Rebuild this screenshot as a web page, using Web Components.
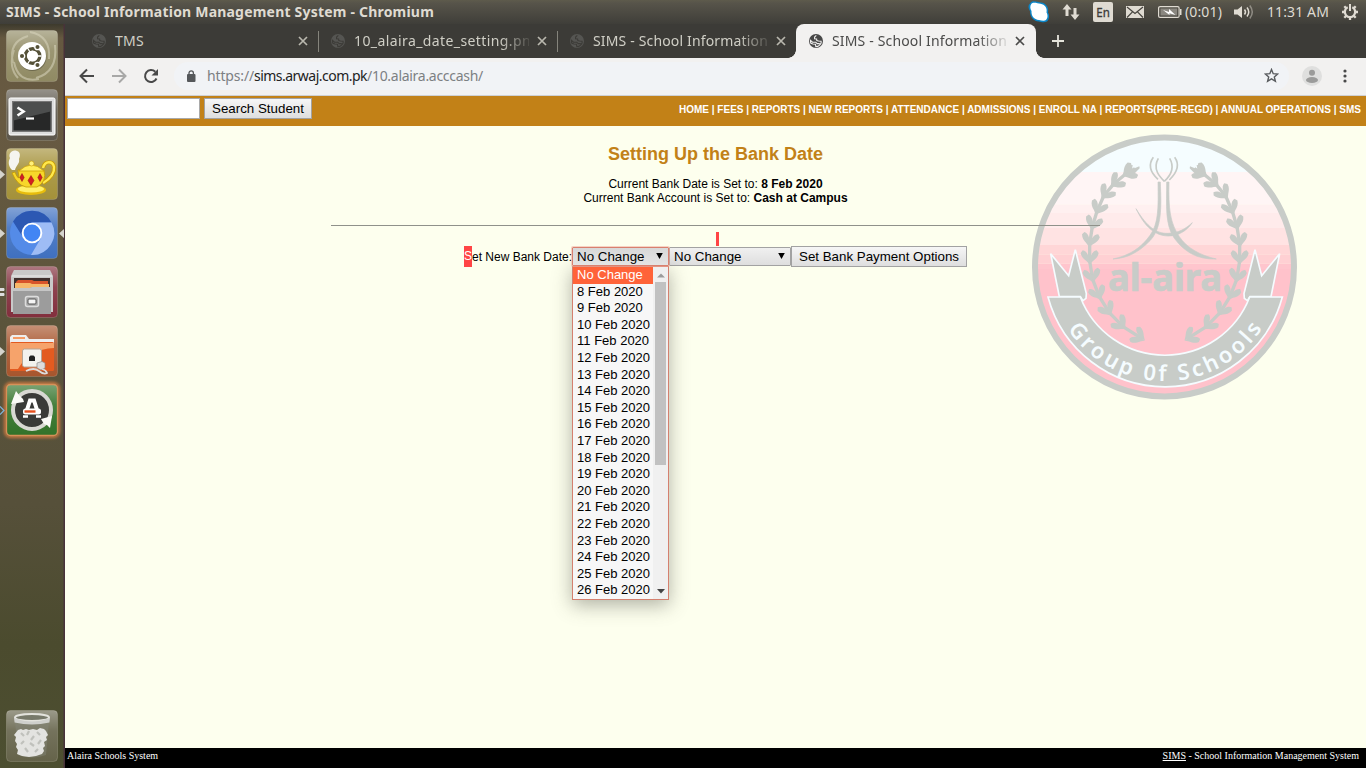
<!DOCTYPE html>
<html lang="en">
<head>
<meta charset="utf-8">
<title>SIMS - School Information Management System</title>
<style>
html,body{margin:0;width:1366px;height:768px;overflow:hidden;background:#fdffee}
</style>
</head>
<body>
<desktop-shell></desktop-shell>
<script>
class Part extends HTMLElement {
  connectedCallback() {
    if (this.shadowRoot) return;
    this.attachShadow({ mode: 'open' }).innerHTML = this.view();
  }
}
const define = (name, view) => customElements.define(name, class extends Part { view() { return view(this); } });

/* Text run that spreads its letters to fill the width given in "w". */
customElements.define('fit-text', class extends HTMLElement {
  connectedCallback() {
    if (this.shadowRoot) return;
    this.attachShadow({ mode: 'open' }).innerHTML =
      '<style>:host{display:inline-block;white-space:pre}span{display:inline-block}</style><span><slot></slot></span>';
    const w = +this.getAttribute('w'), n = this.textContent.length;
    const s = this.shadowRoot.querySelector('span');
    const now = s.getBoundingClientRect().width;
    if (now && w) { s.style.letterSpacing = ((w - now) / n) + 'px'; this.style.width = w + 'px'; }
  }
});

define('top-panel', () => `
<style>
:host{display:flex;align-items:center;justify-content:space-between;height:24px;box-sizing:border-box;padding:0 7px 0 6px;
 background:linear-gradient(#5e5b4c 0,#57544a 3px,#3f3e39 100%);color:#dfdbd2;font:14px "Noto Sans",sans-serif}
.t{font:bold 14px "Noto Sans",sans-serif;line-height:24px}
.r{display:flex;align-items:center;height:24px;line-height:24px}
svg{display:block}
</style>
<fit-text class="t" w="428">SIMS - School Information Management System - Chromium</fit-text>
<div class="r">
<svg width="22" height="24" viewBox="0 0 22 24"><path d="M2 3.500C4-.5 9 2 13 2.500c5 .5 8 5 7 10 2 3 1 7-1 9-3 1.500-6 .5-8 0C5 21 2 17 2 11 0 8 0 5 2 3.500Z" fill="#0c86c8"/><path d="M3 4.500C5 1.500 9 3.500 12.500 3.800c4.500.7 7 4.200 6 8.700 1.800 3 1 6-.5 7.500-2 1.300-4.500.3-7 0C6 19.500 3.200 16 3.500 11 2 8.500 2 6 3 4.500Z" fill="#fff"/></svg>
<svg width="18" height="18" viewBox="0 0 18 18" style="margin-left:12px" fill="#dfdbd2"><path d="M5 1 .5 6.500h3V13h3V6.500h3ZM13 17l4.500-5.500h-3V5h-3v6.500h-3Z"/></svg>
<svg width="20" height="20" viewBox="0 0 20 20" style="margin-left:13px"><rect width="20" height="20" rx="2" fill="#dfdbd2"/><text x="3.300" y="15.200" font-family="Noto Sans" font-size="13" textLength="13.500" lengthAdjust="spacingAndGlyphs" fill="#3c3b37" stroke="#3c3b37" stroke-width=".3">En</text></svg>
<svg width="18" height="14" viewBox="0 0 18 14" style="margin-left:13px"><rect y="1" width="18" height="12" fill="#dfdbd2"/><path d="m1 2 8 6.500L17 2M1 12.500l5.500-5.700M17 12.500l-5.500-5.700" fill="none" stroke="#45433d" stroke-width="1.200"/></svg>
<svg width="24" height="14" viewBox="0 0 24 14" style="margin-left:14px"><rect x=".6" y="1.600" width="20.500" height="10.800" rx="1.500" fill="none" stroke="#dfdbd2" stroke-width="1.200"/><rect x="2.500" y="3.500" width="16.700" height="7" fill="#8a8780"/><path d="M22 4h1.500v6H22Z" fill="#dfdbd2"/><path d="m5 5 6 2V4l6.500 6-6-1.800V10Z" fill="#fff"/></svg>
<fit-text w="37" style="margin-left:3px">(0:01)</fit-text>
<svg width="20" height="16" viewBox="0 0 20 16" style="margin-left:12px"><path d="M0 5.500h3.500L8 2v12l-4.500-3.500H0Z" fill="#dfdbd2"/><g fill="none" stroke="#dfdbd2" stroke-width="1.500"><path d="M10.500 5.500q2 2.500 0 5"/><path d="M13 3.500q3.500 4.500 0 9"/><path d="M15.800 1.500q5 6.500 0 13" opacity=".45"/></g></svg>
<fit-text w="62" style="margin-left:13px">11:31 AM</fit-text>
<svg width="18" height="18" viewBox="-9 -9 18 18" style="margin-left:12px"><g stroke="#dfdbd2" stroke-width="2.300" fill="none"><path d="M-2.300-4.700A5.200 5.200 0 1 0 2.300-4.700"/><path d="M0-8V-1" stroke-width="2"/><path d="m-8 0h3M5 0h3M0 5v3M-5.700-5.700l2 2M5.700-5.700l-2 2M-5.700 5.700l2-2M5.700 5.700l-2-2"/></g></svg>
</div>`);

const tileArt = {
ubuntu: ['#908a63', `<path d="M24 2Q45 6 43 29M49 15Q52 42 30 48M7 33Q2 12 22 6M33 49Q12 53 8 32M12 48Q2 37 8 20" fill="none" stroke="#d8d5bd" stroke-width="2" opacity=".55"/><circle cx="26.500" cy="27" r="14" fill="#55513c" opacity=".6"/><circle cx="26" cy="26" r="14" fill="#fff"/><circle cx="26.500" cy="26" r="7.300" fill="none" stroke="#555138" stroke-width="3.400"/><g stroke="#fff" stroke-width="1.300" fill="#555138"><path d="m26.500 26 9 0M26.500 26l-5-8M26.500 26l-5 8" /><circle cx="26.500" cy="26" r="5.200" fill="#fff" stroke="none"/><circle cx="16" cy="26" r="2.700"/><circle cx="31.500" cy="17" r="2.700"/><circle cx="31.500" cy="35" r="2.700"/></g>`],
terminal: ['#5c564b', `<rect x="3" y="9" width="46" height="37" rx="1.500" fill="#ddd" stroke="#fff"/><rect x="6" y="12" width="40" height="31" fill="#777"/><rect x="7.500" y="13.500" width="37" height="28" fill="#272828"/><path d="M7.500 13.500h37v9l-37 9Z" fill="#4c4e4e"/><path d="m11.500 18.500 6 4-6 4" fill="none" stroke="#fff" stroke-width="2.600"/><path d="M20 29.500h8" stroke="#fff" stroke-width="2.200"/>`],
teapot: ['#a49139', `<path d="M6 22C1 17 3 12 4 10 2 6 6 1 11 3c4 1 3 6 2 8 1 5-3 6-4 11Z" fill="#f5f5ef"/><path d="M37 20C39 12 47 13 48 19c1 8-6 13-11 16" fill="none" stroke="#c89b00" stroke-width="4"/><path d="M37 20C39 12 47 13 48 19c1 8-6 13-11 16" fill="none" stroke="#ffe84c" stroke-width="2.400"/><ellipse cx="25" cy="42" rx="15" ry="5" fill="#e8bd0c"/><ellipse cx="25" cy="41" rx="13" ry="3.500" fill="#fff06a"/><path d="M12 22h26q3 12-7 17H20Q11 37 6 25l3-1q2 6 4 6Z" fill="#f7d72a" stroke="#c79a00" stroke-width=".8"/><path d="M13 23q12-12 25 0Z" fill="#ffec57" stroke="#c79a00" stroke-width=".7"/><circle cx="25.500" cy="15.500" r="2.500" fill="#fff07a" stroke="#c79a00" stroke-width=".6"/><g fill="#d41e22" stroke="#8e1313" stroke-width=".5"><path d="m16 25.500 2.200 4-2.200 4-2.200-4ZM25 27.500l3 5-3 5-3-5ZM34 25.500l2.200 4-2.200 4-2.200-4Z"/></g>`],
chromium: ['#3f70c0', `<circle cx="26" cy="26" r="22" fill="#548be8"/><path d="M7 14.500A22 22 0 0 1 45.500 15.500H26Q17 16 15.500 28Z" fill="#2c58b3"/><path d="M26 15.500h19.500A22 22 0 0 1 25 48l10-17Q37 20 26 15.500Z" fill="#9ebcf5"/><circle cx="26" cy="26" r="10.300" fill="#fff"/><circle cx="26" cy="26" r="8.400" fill="#4285f4"/>`],
files: ['#822f3d', `<path d="M8 4h36l3 6v36H5V10Z" fill="#c9c9c9"/><path d="M6 10h40" stroke="#eee"/><rect x="8" y="12" width="36" height="12" fill="#40302e"/><path d="M12 14h14l2 1h14v9H10V16Z" fill="#d8542b"/><path d="M9 17h15l2 1h17v6H9Z" fill="#f7b86a"/><path d="M7 22h17l2-1h19v27H7Z" fill="#9c9c9c"/><path d="M7 22h17l2-1h19v4H7Z" fill="#c5c5c5"/><rect x="19.500" y="30.500" width="13" height="10" rx="2" fill="#a7a7a7" stroke="#ddd" stroke-width="1.500"/><rect x="22" y="33" width="8" height="5" rx="1" fill="#f4f4f4" stroke="#555"/>`],
folder: ['#a7552d', `<path d="M4 12 6 10h14l3 4h25v8H4Z" fill="#eee"/><path d="M7 12h12v2H7Z" fill="#f59b65"/><rect x="4" y="17" width="44" height="29" rx="1.500" fill="#e35b20"/><path d="M4 18h44v5Q23 24 12 44H4Z" fill="#f6a36b"/><rect x="16.500" y="24" width="19" height="18" rx="2" fill="#f3f2ee" stroke="#b7a493"/><path d="M23 36v-4l1.500-1.500h3L29 32v4Z" fill="#222"/><path d="m31 38 5-1.500 3 1.500v5l-4 2-4-2Z" fill="#ddd" stroke="#8b8b8b" stroke-width=".7"/><path d="M20 46q8-4 13 0t8 2q-1-3-5-4" fill="none" stroke="#ddd" stroke-width="1.800"/>`],
updater: ['#327229', `<circle cx="26" cy="26" r="19" fill="#393a38" stroke="#d8d8d3" stroke-width="4"/><path d="M5 20 10 7l3 4 4 4 1 3ZM35 35l11-3-2 12-3-3-3-1Z" fill="#fafaf7"/><path d="m20 29 4-12.500h4L32 29" fill="none" stroke="#fff" stroke-width="4"/><rect x="17" y="24.500" width="18" height="6" rx="2.500" fill="#fff"/><path d="M17 32.500h5M30 32.500h5" stroke="#fff" stroke-width="2.400"/><rect x="18.500" y="26.300" width="11" height="2.400" fill="#e6501e"/>`],
trash: ['#65634a', `<path d="M9 11h34l-3 34q-14 5-28 0Z" fill="#85877a" opacity=".45"/><g fill="#e3e3e0"><path d="m12 20 3-1 2 1 3-1 3 1 4-1 4 1 3-2 4 1 2 2 2 4-2 2 1 3-3 2 1 4-2 2 1 3-2 3-6 2-7 1-7-1-5-2 1-4-2-3 1-3-2-3 1-4-2-2Z"/></g><path d="m15 23 3 3M23 21l-2 4M31 22l3 3M28 26l-3 4M18 31l-3 3M24 33l4 3M35 30l-3 4M19 38l3 4M32 39l-3 3" fill="none" stroke="#c0c1bc" stroke-width="2.200"/><ellipse cx="26" cy="7.500" rx="17" ry="3.600" fill="#77796a" stroke="#e3e3dd" stroke-width="2"/><path d="M8 8q18 7 36 0l-.6 4.500q-17.400 4-34.800 0Z" fill="#cfd0cc"/>`]
};
define('launcher-tile', el => {
  const [bg, art] = tileArt[el.getAttribute('app')], mark = el.getAttribute('mark') || '';
  const marks = { run: '<path d="M0 22l5 4.500L0 31Z" fill="#d5d4cd"/>', two: '<path d="M0 22.500h4v2H0ZM0 27.500h4v2H0Z" fill="#ddd" stroke="#ddd"/>', urg: '<path d="M0 22.500l4 4L0 30.500" fill="none" stroke="#7db4dc" stroke-width="1.200"/>', focus: '<path d="M0 22l5 4.500L0 31ZM64 22l-5 4.500 5 4.500Z" fill="#d5d4cd"/>' };
  return `<style>:host{display:block;height:52px}svg{display:block;overflow:visible}</style>
<svg width="65" height="52" viewBox="0 0 65 52"><defs><linearGradient id="g" x2="0" y2="1"><stop stop-color="#fff" stop-opacity=".35"/><stop offset=".4" stop-color="#fff" stop-opacity=".1"/><stop offset="1" stop-color="#fff" stop-opacity="0"/></linearGradient><filter id="f" x="-20%" y="-20%" width="140%" height="140%"><feGaussianBlur stdDeviation="1.500"/></filter></defs>
${mark === 'urg' ? '<rect x="5.500" y="-.5" width="53" height="53" rx="5" fill="none" stroke="#e08040" stroke-width="2.500" filter="url(#f)"/>' : ''}
<rect x="6.500" y=".5" width="51" height="51" rx="4" fill="${bg}" stroke="#c8c4b4" stroke-opacity=".25"/><rect x="6.500" y=".5" width="51" height="51" rx="4" fill="url(#g)"/><g transform="translate(6)">${art}</g>
${mark === 'urg' ? '<rect x="6.500" y=".5" width="51" height="51" rx="4" fill="none" stroke="#d79058" stroke-width="1.300"/>' : ''}${marks[mark] || ''}</svg>`;
});
define('launcher-bar', () => `
<style>
:host{display:flex;flex-direction:column;gap:7px;box-sizing:border-box;padding:6px 0;width:65px;height:744px;
 background:linear-gradient(90deg,transparent 63px,#48323a 64px),linear-gradient(#3d3a2d 0,#655840 14px,#685a42 100px,#5b543b 300px,#56503a 480px,#4b4b2e 620px,#4d4f31 744px)}
.end{margin-top:auto}
</style>
<launcher-tile app="ubuntu"></launcher-tile><launcher-tile app="terminal"></launcher-tile><launcher-tile app="teapot" mark="run"></launcher-tile>
<launcher-tile app="chromium" mark="focus"></launcher-tile><launcher-tile app="files" mark="two"></launcher-tile><launcher-tile app="folder" mark="run"></launcher-tile>
<launcher-tile app="updater" mark="urg"></launcher-tile><launcher-tile app="trash" class="end"></launcher-tile>`);

define('browser-tab', el => {
  const on = el.hasAttribute('active'), bg = on ? '#f2f1f0' : '#3c3b37';
  return `<style>
:host{display:block;position:relative;width:239px;height:34px;font:14px "Noto Sans",sans-serif;color:${on ? '#4b4b4a' : '#d0cfc6'}}
.b{display:grid;grid-template-columns:14px 175px 10px;column-gap:8px;align-items:center;box-sizing:border-box;height:34px;padding-left:13px;${on ? 'background:#f2f1f0;border-radius:8px 8px 0 0;margin-right:-1px' : ''}}
.b>svg{display:block}
.t{margin-left:1px;width:175px;overflow:hidden;white-space:nowrap;line-height:34px;${el.hasAttribute('fade') ? '-webkit-mask:linear-gradient(90deg,#000 145px,transparent 180px)' : ''}}
.x{margin-left:1px}
${el.hasAttribute('rule') ? ':host::after{content:"";position:absolute;right:-1px;top:7px;width:1px;height:21px;background:#85847c}' : ''}
.f{position:absolute;bottom:0;width:8px;height:8px}
.l{left:-8px;background:radial-gradient(circle at 0 0,transparent 7.500px,#f2f1f0 8px)}
.r{right:-9px;background:radial-gradient(circle at 100% 0,transparent 7.500px,#f2f1f0 8px)}
</style>${on ? '<i class="f l"></i><i class="f r"></i>' : ''}
<div class="b"><svg width="14" height="14" viewBox="0 0 14 14"><circle cx="7" cy="7" r="7" fill="${on ? '#484848' : '#555552'}"/><path d="M7.300 1.400 5.600 3v1.800l2 .2.200 1.500 1.700.5 2.600.2q.3 1.500-.4 2.800L9.500 9.600H8.200L6.800 8.200H3.500L1.500 6.300q-.2 1.500.4 3l2 .7 2.600.3.300 2.300 2-.2 2.700-2" fill="none" stroke="${bg}" stroke-width="1.100"/></svg>
<div class="t"><slot></slot></div>
<svg class="x" width="10" height="10" viewBox="0 0 10 10"><path d="m1 1 8 8M9 1 1 9" stroke="${on ? '#4b4b4a' : '#b9b8ae'}" stroke-width="1.700"/></svg></div>`;
});
define('tab-strip', () => `
<style>:host{display:flex;align-items:center;height:34px;padding-left:14px;background:#3c3b37;font:14px "Noto Sans",sans-serif}.p{margin-left:17px}</style>
<browser-tab rule><fit-text w="29">TMS</fit-text></browser-tab>
<browser-tab rule fade><fit-text w="177">10_alaira_date_setting.pn</fit-text></browser-tab>
<browser-tab fade><fit-text w="175">SIMS - School Information</fit-text></browser-tab>
<browser-tab active fade><fit-text w="175">SIMS - School Information</fit-text></browser-tab>
<svg class="p" width="12" height="12" viewBox="0 0 12 12"><path d="M6 0v12M0 6h12" stroke="#e6e5dc" stroke-width="1.800"/></svg>`);

define('tool-bar', () => `
<style>
:host{display:flex;align-items:center;box-sizing:border-box;height:38px;background:#f2f1f0;border-bottom:1px solid #cfd0d2;font:14px "Noto Sans",sans-serif;padding:0 13px 2px 14px}
svg{display:block}
.o{display:flex;align-items:center;flex:1;height:28px;margin:0 13px 0 15px;padding:0 10px 0 13px;border-radius:14px;background:#f1f3f6;color:#7c8083}
.u{margin-left:11px;display:flex;flex:1}.d{color:#222}
</style>
<svg width="16" height="16" viewBox="0 0 16 16"><path d="M15 8H2M8 1.500 1.500 8 8 14.500" fill="none" stroke="#494949" stroke-width="2"/></svg>
<svg width="16" height="16" viewBox="0 0 16 16" style="margin-left:16px"><path d="M1 8h13M8 1.500 14.500 8 8 14.500" fill="none" stroke="#a8a8a7" stroke-width="2"/></svg>
<svg width="16" height="16" viewBox="0 0 16 16" style="margin-left:16px"><path d="M13.500 10.500A6 6 0 1 1 12.300 3.800" fill="none" stroke="#494949" stroke-width="2"/><path d="M15 1v6.500H8.500Z" fill="#494949"/></svg>
<div class="o"><svg width="10" height="12" viewBox="0 0 10 12" style="margin-left:-1px"><rect x="1" y="4" width="8.500" height="8" rx="1" fill="#55585b"/><path d="M3 5V3a2.200 2.200 0 0 1 4.400 0v2" fill="none" stroke="#55585b" stroke-width="1.300"/></svg>
<div class="u"><fit-text w="47">https://</fit-text><fit-text w="113" class="d">sims.arwaj.com.pk</fit-text><fit-text w="116">/10.alaira.acccash/</fit-text></div>
<svg width="15" height="15" viewBox="0 0 15 15"><path d="m7.500 1.500 1.700 4.200 4.500.3-3.400 2.900 1.100 4.400-3.900-2.400-3.900 2.400 1.100-4.400L1.300 6l4.500-.3Z" fill="none" stroke="#585b5e" stroke-width="1.400"/></svg></div>
<svg width="20" height="20" viewBox="0 0 20 20"><circle cx="10" cy="10" r="10" fill="#dfdfde"/><circle cx="10" cy="6.700" r="3" fill="#9b9b9a"/><ellipse cx="10" cy="14" rx="6" ry="3" fill="#9b9b9a"/></svg>
<svg width="4" height="14" viewBox="0 0 4 14" style="margin:0 6px 0 21px" fill="#494949"><circle cx="2" cy="2" r="1.600"/><circle cx="2" cy="7" r="1.600"/><circle cx="2" cy="12" r="1.600"/></svg>`);

define('push-button', () => `<style>:host{display:flex;align-items:center;justify-content:center;box-sizing:border-box;height:21px;border:1px solid #a2a2a2;background:linear-gradient(#f6f6f6,#dedede);color:#000;font:13.330px "Liberation Sans",Arial,sans-serif;white-space:nowrap}</style><slot></slot>`);
define('drop-select', el => `<style>:host{display:flex;align-items:center;justify-content:space-between;box-sizing:border-box;height:19px;border:1px solid #a2a2a2;border-radius:1px;background:linear-gradient(#f0f0f0,#dedede);padding:0 5px 0 4px;font:13.330px "Liberation Sans",Arial,sans-serif;white-space:nowrap}
:host([open]){background:linear-gradient(#d8d8d8,#e4e4e4);border-color:#d8806f;box-shadow:0 0 0 1px #f2a89880;z-index:2}
svg{display:block;margin-top:-2px}</style><slot></slot><svg width="7" height="6" viewBox="0 0 7 6"><path d="M.2 0h6.600L3.500 6Z"/></svg>`);

define('option-list', () => `
<style>
:host{display:flex;box-sizing:border-box;width:97px;height:334px;border:1px solid #d4806f;background:#f7f7f7;box-shadow:0 5px 18px rgba(70,70,60,.42);font:13px "Liberation Sans",Arial,sans-serif;color:#000}
.l{flex:1;display:grid;grid-template-rows:repeat(20,16.600px);line-height:16.600px;white-space:nowrap}
.l div{padding-left:4px}.l div:first-child{background:#ff6339;color:#fff}
.s{width:15px;display:flex;flex-direction:column;align-items:center;background:#f0f0f0;box-sizing:border-box;padding:6px 0 5px}
.th{width:11px;height:183px;margin-top:4px;background:#c1c1c1}
.s svg:last-child{margin-top:auto}svg{display:block}
</style>
<div class="l"><div>No Change</div>${Array.from({ length: 19 }, (_, i) => `<div>${i + 8} Feb 2020</div>`).join('')}</div>
<div class="s"><svg width="8" height="5" viewBox="0 0 8 5"><path d="M0 4.500h8L4 .5Z" fill="#9c9c9c"/></svg><div class="th"></div><svg width="8" height="5" viewBox="0 0 8 5"><path d="M0 0h8L4 4.500Z" fill="#444"/></svg></div>`);

/* School crest: banded disc, laurel, praying hands and ribbon. */
define('school-crest', () => {
  const C = '#c8ccc8', W = '#f5fcff';
  const pts = [[345,128],[316,145],[280,175],[251,210],[231,256],[217,302],[209,353],[209,405],[218,460],[238,512],[268,560],[309,602],[366,638]];
  const leaf = 'M-10 0L0-10C6-18 12-25 24-27L32-21C31-14 26-8 16-4L14 0Z';
  let art = `<path d="M${pts.map(p => p.join(' ')).join('L')}" fill="none" stroke="${C}" stroke-width="10" stroke-linejoin="round"/>`;
  for (let i = 1; i < pts.length; i++) {
    const [x, y] = pts[i], [u, v] = pts[i - 1], a = Math.atan2(v - y, u - x) * 180 / Math.PI;
    art += `<g transform="translate(${x} ${y}) rotate(${a})" fill="${C}"><path d="${leaf}"/><path d="${leaf}" transform="scale(1 -1)"/></g>`;
  }
  art += `<path d="M318 150 328 118 338 117 336 130 358 121 359 127 340 146Z" fill="${C}"/>`;
  const tail = `<path d="M92 383 146 449 166 371 199 503 198 517 189 524 181 512H118Z" fill="${C}" stroke="${W}" stroke-width="5"/>`;
  const bands = [[27,111,'#f5fdff'],[138,98,'#fff5f5'],[236,25,'#fff0f0'],[261,45,'#ffebeb'],[306,51,'#ffe3e3'],[357,28,'#ffd6d7'],[385,28,'#ffd0d3'],[413,16,'#ffc5cd'],[429,400,'#ffc2cb']];
  return `<style>:host{display:block;width:290px;height:280px}svg{display:block}</style>
<svg width="290" height="280" viewBox="0 0 870 840"><defs><clipPath id="c"><circle cx="433.500" cy="423" r="389"/></clipPath><path id="arc" d="M142 608A350 350 0 0 0 734 596"/></defs>
<g clip-path="url(#c)">${bands.map(b => `<rect y="${b[0]}" width="870" height="${b[1]}" fill="${b[2]}"/>`).join('')}</g>
<circle cx="433.500" cy="423" r="388.500" fill="none" stroke="${C}" stroke-width="18"/>
${art}<g transform="translate(868) scale(-1 1)">${art}</g>
<g fill="${C}" stroke="${C}" stroke-width="2"><path d="M414 168h7C424 245 426 305 391 343 358 377 326 396 279 399 326 389 363 367 390 328 416 293 415 245 414 168Z"/><path d="M440 168h7C445 246 450 291 478 332 502 367 541 388 589 399 534 401 495 380 463 337 434 294 440 239 440 168Z"/><path d="M348 248C382 304 410 323 444 322 475 321 496 309 517 290 498 317 473 330 444 330 404 329 374 302 348 248Z"/></g>
<g fill="none" stroke="${C}" stroke-width="5"><path d="M400 94C387 112 386 135 414 160M464 94C477 112 476 135 448 162M415 97C396 130 421 154 433 166M449 97C468 130 446 154 433 166"/></g>
<text x="264" y="496" font-family="Noto Sans" font-weight="bold" font-size="112" textLength="342" lengthAdjust="spacingAndGlyphs" fill="${C}" stroke="${C}" stroke-width="2">al-aira</text>
${tail}<g transform="translate(871) scale(-1 1)">${tail}</g>
<path d="M84 513H181A272 272 0 0 0 689 513H787A364 364 0 0 1 84 513Z" fill="${C}" stroke="${W}" stroke-width="5"/>
<text font-family="Noto Sans" font-weight="600" font-size="66" fill="${W}" textLength="690"><textPath href="#arc" textLength="690" startOffset="2">Group 0f Schools</textPath></text></svg>`;
});

define('site-header', () => `
<style>:host{display:flex;align-items:flex-start;box-sizing:border-box;height:30px;padding:2px 5px 0 2px;background:#c28117;color:#fff}
.in{box-sizing:border-box;width:133px;height:21px;background:#fff;border:1px solid #a9a9a9;margin-right:4px}push-button{width:108px}
nav{margin-left:auto;font:bold 10px/12px "Liberation Sans",Arial,sans-serif;margin-top:6px;white-space:pre}</style>
<div class="in"></div><push-button>Search Student</push-button>
<nav><fit-text w="682">HOME | FEES | REPORTS | NEW REPORTS | ATTENDANCE | ADMISSIONS | ENROLL NA | REPORTS(PRE-REGD) | ANNUAL OPERATIONS | SMS</fit-text></nav>`);

define('site-main', () => `
<style>
:host{display:flex;flex-direction:column;align-items:center;position:relative;box-sizing:border-box;height:622px;padding-top:18px;background:#fdffee;color:#000;font:12px/14px "Liberation Sans",Arial,sans-serif}
school-crest{position:absolute;left:955px;top:0}
h2{margin:0;font-size:18px;line-height:21px;color:#c28117;position:relative}
.c{margin-top:12px;text-align:center}
hr{box-sizing:border-box;width:769px;height:1px;margin:20px 0 0;border:0;background:#8f918a;position:relative}
.k{width:3px;height:14px;margin:6px 0 0 3px;background:#ff4545}
.f{display:flex;align-items:center;height:21px;margin-top:0}
.f mark{background:#ff4545;color:#fff;line-height:21px;display:inline-block;height:21px}
.p{position:relative}
.p option-list{position:absolute;left:0;top:19px;z-index:1}
.p drop-select{position:relative;width:97px}
</style>
<school-crest></school-crest>
<h2>Setting Up the Bank Date</h2>
<div class="c">Current Bank Date is Set to: <b>8 Feb 2020</b><br>Current Bank Account is Set to: <b>Cash at Campus</b></div>
<hr><div class="k"></div>
<div class="f"><mark>S</mark>et New Bank Date:<div class="p"><option-list></option-list><drop-select open>No Change</drop-select></div><drop-select style="width:122px">No Change</drop-select><push-button style="width:176px">Set Bank Payment Options</push-button></div>`);

define('site-footer', () => `<style>:host{display:flex;justify-content:space-between;box-sizing:border-box;height:20px;padding:2px 7px 0 2px;background:#000;color:#fff;font:10px/12px "Liberation Serif","Times New Roman",serif}</style><span>Alaira Schools System</span><span><u>SIMS</u> - School Information Management System</span>`);

define('desktop-shell', () => `
<style>:host{display:grid;grid-template:24px 744px/65px 1301px;width:1366px;height:768px;overflow:hidden}top-panel{grid-column:1/3}main{display:flex;flex-direction:column;min-width:0}</style>
<top-panel></top-panel><launcher-bar></launcher-bar>
<main><tab-strip></tab-strip><tool-bar></tool-bar><site-header></site-header><site-main></site-main><site-footer></site-footer></main>`);
</script>
</body>
</html>
